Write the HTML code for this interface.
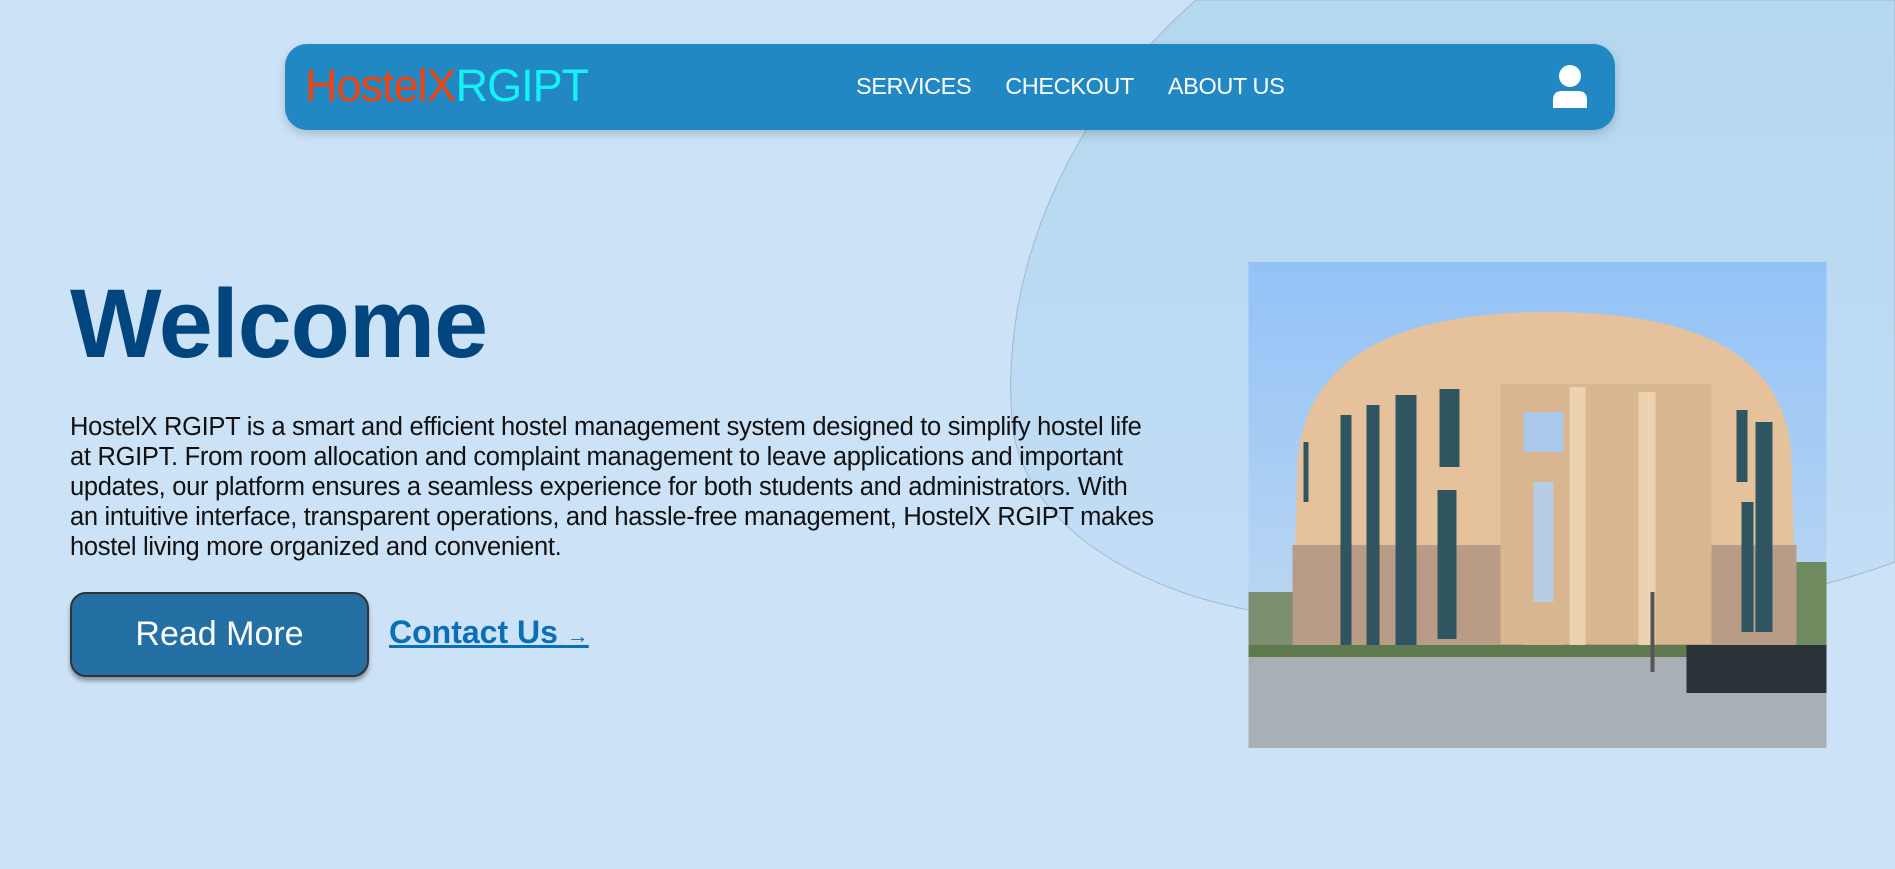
<!DOCTYPE html>
<html><head><meta charset="utf-8"><style>
*{margin:0;padding:0;box-sizing:border-box}
html,body{width:1895px;height:869px;overflow:hidden;background:#cce3f7;font-family:"Liberation Sans",Roboto,sans-serif}
.blob{position:absolute;left:0;top:0}
nav{position:absolute;left:285px;top:44px;width:1330px;height:86px;background:#2188c4;border-radius:22px;box-shadow:0 4px 10px rgba(0,0,0,.18)}
.logo{position:absolute;left:20px;top:16px;font-size:45px;letter-spacing:-1px}
.logo .a{color:#f2430f}.logo .b{color:#14f2f6}
.links{position:absolute;left:571px;top:29px;font-size:23.5px;color:#fff;letter-spacing:-0.4px}
.links span{margin-right:34px}
h1{position:absolute;left:70px;top:268px;font-size:97px;font-weight:bold;color:#00457d;letter-spacing:-1px}
p{position:absolute;left:70px;top:412px;width:1089px;font-size:25.5px;line-height:30px;color:#111;letter-spacing:-0.3px}
.btn{position:absolute;left:70px;top:592px;width:299px;height:85px;background:#2470a4;border:2px solid #333;border-radius:16px;box-shadow:0 4px 4px rgba(0,0,0,.35);color:#fff;font-size:34px;text-align:center;line-height:81px}
.contact{position:absolute;left:389px;top:614px;font-size:32px;font-weight:bold;color:#0a6fb5;text-decoration:underline}
.contact small{font-size:22px;font-weight:normal;text-decoration:none}
.img{position:absolute;left:1248px;top:262px}
</style></head><body>
<svg class="blob" width="1895" height="869"><defs><linearGradient id="g" x1="0" y1="0" x2="0" y2="1"><stop offset="0" stop-color="#b4d8ee"/><stop offset="1" stop-color="#c3ddf7"/></linearGradient></defs>
<path d="M1196 0 C1070 110 1000 270 1012 420 C1020 520 1130 590 1260 612 L1600 620 C1720 610 1820 590 1895 562 L1895 0 Z" fill="url(#g)" stroke="#9fb8cc" stroke-width="1"/></svg>
<nav><div class="logo"><span class="a">HostelX</span><span class="b">RGIPT</span></div>
<div class="links"><span>SERVICES</span><span>CHECKOUT</span><span>ABOUT US</span></div>
<svg style="position:absolute;left:1268px;top:21px" width="36" height="44"><circle cx="17" cy="11" r="11" fill="#fff"/><path d="M0 43 L0 35 Q0 26 9 26 L25 26 Q34 26 34 35 L34 43 Z" fill="#fff"/></svg>
</nav>
<h1>Welcome</h1>
<p>HostelX RGIPT is a smart and efficient hostel management system designed to simplify hostel life at RGIPT. From room allocation and complaint management to leave applications and important updates, our platform ensures a seamless experience for both students and administrators. With an intuitive interface, transparent operations, and hassle-free management, HostelX RGIPT makes hostel living more organized and convenient.</p>
<div class="btn">Read More</div>
<div class="contact">Contact Us <small>→</small></div>
<svg class="img" width="579" height="486" viewBox="0 0 578 486"><defs><linearGradient id="s" x1="0" y1="0" x2="0" y2="1"><stop offset="0" stop-color="#93c2f7"/><stop offset="1" stop-color="#c8def0"/></linearGradient></defs>
<rect width="578" height="486" fill="url(#s)"/>
<rect x="0" y="330" width="60" height="70" fill="#7d8f6e"/>
<rect x="530" y="300" width="48" height="100" fill="#6f8a5e"/>
<path d="M49 200 Q60 50 300 50 Q540 50 543 200 L548 383 L44 383 Z" fill="#e6c29c"/>
<rect x="44" y="283" width="504" height="100" fill="#b99c86"/>
<rect x="252" y="122" width="211" height="260" fill="#d8b690"/>
<rect x="275" y="150" width="40" height="233" fill="#a9c8ea"/>
<rect x="275" y="190" width="40" height="193" fill="#d8b690"/>
<rect x="285" y="220" width="20" height="120" fill="#b7cde6"/>
<rect x="321" y="125" width="16" height="258" fill="#edd2b0"/>
<rect x="390" y="130" width="17" height="253" fill="#edd2b0"/>
<g fill="#2f5560"><rect x="92" y="153" width="11" height="230"/><rect x="118" y="143" width="13" height="240"/><rect x="147" y="133" width="21" height="250"/><rect x="191" y="127" width="20" height="78"/><rect x="189" y="228" width="19" height="149"/><rect x="488" y="148" width="11" height="72"/><rect x="493" y="240" width="12" height="130"/><rect x="507" y="160" width="17" height="210"/><rect x="55" y="180" width="5" height="60"/></g>
<rect x="0" y="393" width="578" height="93" fill="#a9b0b5"/>
<rect x="0" y="383" width="578" height="12" fill="#5f7a4f"/>
<rect x="438" y="383" width="140" height="48" fill="#2c3338"/>
<rect x="402" y="330" width="4" height="80" fill="#555"/>
</svg>
</body></html>
